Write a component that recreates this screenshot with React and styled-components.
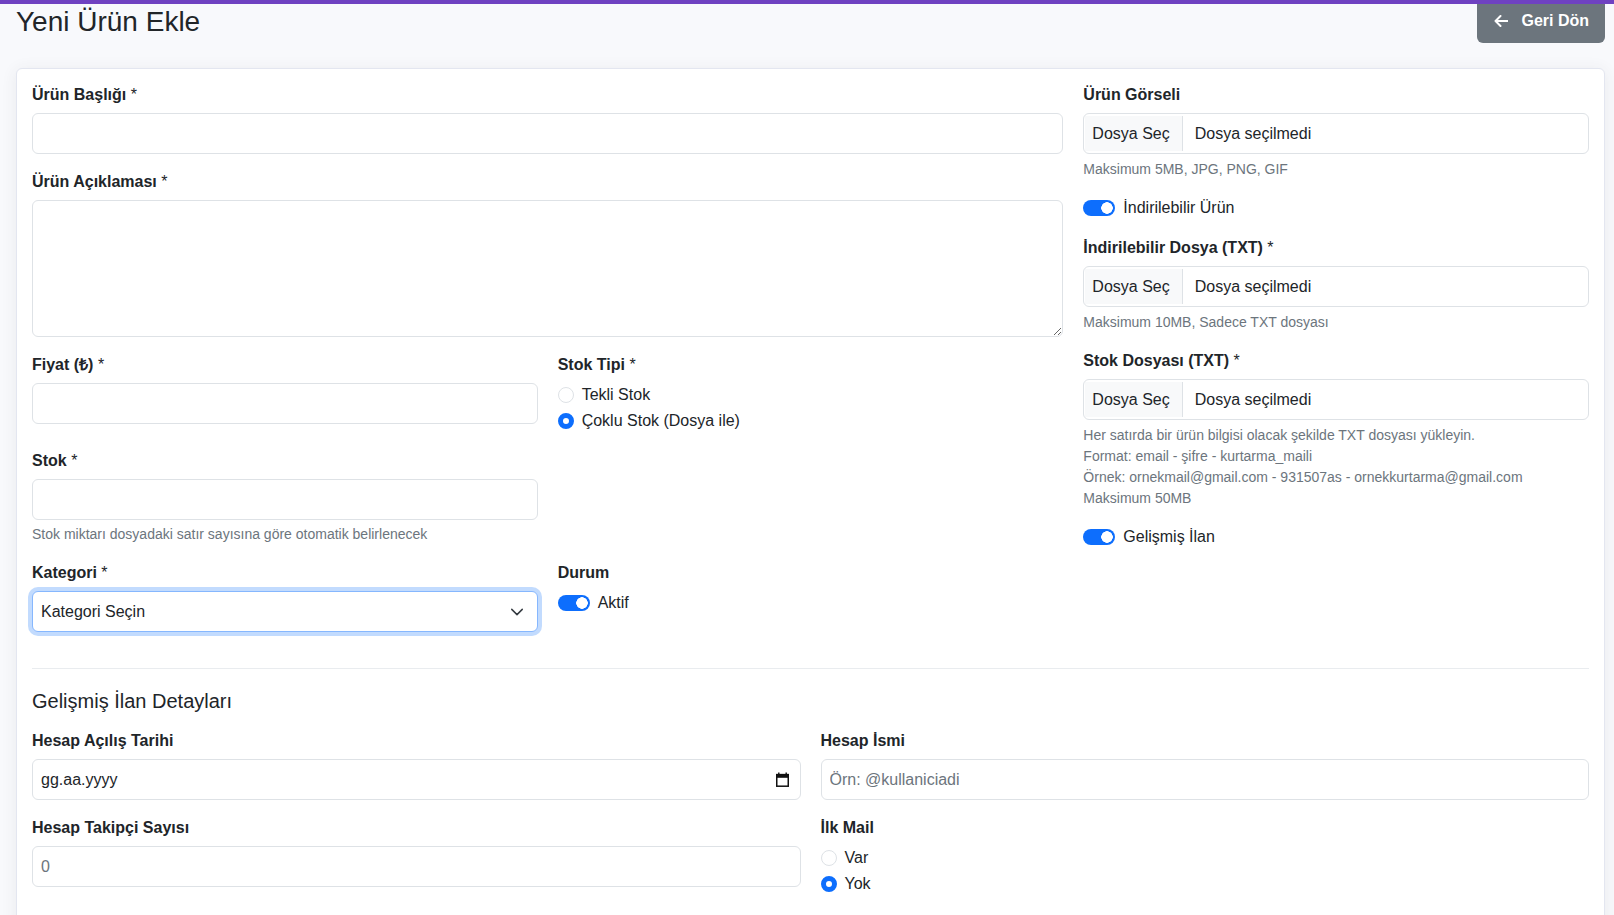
import React from 'react'
import styled, { createGlobalStyle } from 'styled-components'

const GlobalStyle = createGlobalStyle`
  * { box-sizing: border-box; }
  html, body { margin: 0; overflow: hidden; }
  body {
    background: #f8f9fc;
    font-family: "Liberation Sans", Arial, Helvetica, sans-serif;
    font-size: 16px;
    line-height: 1.5;
    color: #212529;
  }
`

const TopBar = styled.div`
  height: 4px;
  background: #6f42c1;
`

const Page = styled.div`
  padding: 0 9px 0 16px;
`

const Header = styled.div`
  display: flex;
  justify-content: space-between;
  align-items: flex-start;
  margin-bottom: 25px;
`

const Title = styled.h1`
  margin: 1px 0 0;
  font-size: 28px;
  font-weight: 400;
  line-height: 1.2;
  color: #212529;
`

const BackButton = styled.button`
  display: inline-flex;
  align-items: center;
  gap: 13px;
  padding: 5px 16px 10px 17px;
  border: none;
  border-radius: 0 0 6px 6px;
  background: #6c757d;
  color: #fff;
  font-family: inherit;
  font-size: 16px;
  font-weight: 700;
  line-height: 24px;
  cursor: pointer;
`

const Card = styled.div`
  background: #fff;
  border: 1px solid #e3e6f0;
  border-radius: 6px;
  box-shadow: 0 2px 16px rgba(58, 59, 69, 0.08);
  padding: 14px 15px 16px;
`

const TopGrid = styled.div`
  display: grid;
  grid-template-columns: calc((100% + 20px) * 8 / 12 - 20px) 1fr;
  column-gap: 20px;
`

const Col = styled.div`
  min-width: 0;
`

const HalfGrid = styled.div`
  display: grid;
  grid-template-columns: 1fr 1fr;
  column-gap: 20px;
`

const Field = styled.div`
  margin-bottom: 16px;
`

const Label = styled.label`
  display: block;
  font-weight: 700;
  line-height: 24px;
  margin-bottom: 6px;
`

const Req = styled.span`
  font-weight: 400;
`

const Input = styled.input`
  display: block;
  width: 100%;
  height: 41px;
  padding: 0 8px;
  font-family: inherit;
  font-size: 16px;
  color: #212529;
  background: #fff;
  border: 1px solid #dee2e6;
  border-radius: 6px;
  outline: none;
  &::placeholder { color: #6c757d; }
`

const TextArea = styled.textarea`
  display: block;
  width: 100%;
  height: 137px;
  padding: 8px;
  font-family: inherit;
  font-size: 16px;
  color: #212529;
  border: 1px solid #dee2e6;
  border-radius: 6px;
  outline: none;
  resize: vertical;
`

const Help = styled.div`
  margin-top: ${p => p.$mt || 5}px;
  font-size: 14px;
  line-height: 21px;
  color: #6c757d;
`

const FileBox = styled.div`
  display: flex;
  align-items: stretch;
  height: 41px;
  border: 1px solid #dee2e6;
  border-radius: 6px;
  overflow: hidden;
  background: #fff;
`

const FileButton = styled.span`
  display: flex;
  align-items: center;
  margin: 2px 0 2px 1px;
  padding: 0 12px 0 7px;
  background: #f8f9fa;
  border-right: 1px solid #dee2e6;
  white-space: nowrap;
`

const FileName = styled.span`
  display: flex;
  align-items: center;
  padding-left: 12px;
`

const CheckList = styled.div`
  display: flex;
  flex-direction: column;
  gap: 2px;
`

const CheckRow = styled.label`
  display: flex;
  align-items: flex-start;
  gap: 8px;
  min-height: 24px;
  line-height: 24px;
  margin-bottom: ${p => (p.$spaced ? '16px' : '0')};
`

const Radio = styled.input.attrs({ type: 'radio' })`
  appearance: none;
  flex-shrink: 0;
  width: 16px;
  height: 16px;
  margin: 4px 0 0;
  border-radius: 50%;
  border: 1px solid #dee2e6;
  background: #fff;
  &:checked {
    border: 5px solid #0d6efd;
  }
`

const Switch = styled.input.attrs({ type: 'checkbox' })`
  appearance: none;
  flex-shrink: 0;
  width: 32px;
  height: 16px;
  margin: 4px 0 0;
  border-radius: 8px;
  background: radial-gradient(circle at 24px 8px, #fff 0 5.5px, transparent 6px), #0d6efd;
`

const SelectWrap = styled.div`
  position: relative;
`

const Select = styled.select`
  display: block;
  width: 100%;
  height: 41px;
  padding: 0 36px 0 8px;
  appearance: none;
  font-family: inherit;
  font-size: 16px;
  color: #212529;
  background: #fff;
  border: 1px solid #86b7fe;
  border-radius: 6px;
  box-shadow: 0 0 0 4px rgba(13, 110, 253, 0.25);
  outline: none;
`

const Chevron = styled.svg`
  position: absolute;
  right: 14px;
  top: 50%;
  transform: translateY(-50%);
  pointer-events: none;
`

const DateBox = styled.div`
  display: flex;
  align-items: center;
  justify-content: space-between;
  height: 41px;
  padding: 0 11px 0 8px;
  border: 1px solid #dee2e6;
  border-radius: 6px;
  background: #fff;
`

const Divider = styled.hr`
  border: 0;
  border-top: 1px solid #e9ecef;
  margin: 20px 0;
`

const SectionTitle = styled.h5`
  margin: 0 0 16px;
  font-size: 20px;
  font-weight: 400;
  line-height: 1.2;
`

const ArrowIcon = () => (
  <svg width="14" height="12" viewBox="0 0 14 12" fill="none">
    <path d="M6.5 1 1.5 6l5 5M1.5 6H13.5" stroke="#fff" strokeWidth="2" strokeLinecap="round" strokeLinejoin="round" />
  </svg>
)

const CalendarIcon = () => (
  <svg width="13" height="15" viewBox="0 0 13 15">
    <path d="M2.8 0.5v2.5M10.2 0.5v2.5" stroke="#111" strokeWidth="1.4" />
    <rect x="0.75" y="2.6" width="11.5" height="11.6" fill="none" stroke="#111" strokeWidth="1.5" />
    <rect x="0.75" y="2.6" width="11.5" height="3.2" fill="#111" />
  </svg>
)

const FileInput = () => (
  <FileBox>
    <FileButton>Dosya Seç</FileButton>
    <FileName>Dosya seçilmedi</FileName>
  </FileBox>
)

export default function App() {
  return (
    <>
      <GlobalStyle />
      <TopBar />
      <Page>
        <Header>
          <Title>Yeni Ürün Ekle</Title>
          <BackButton>
            <ArrowIcon />
            Geri Dön
          </BackButton>
        </Header>

        <Card>
          <TopGrid>
            <Col>
              <Field>
                <Label>Ürün Başlığı <Req>*</Req></Label>
                <Input />
              </Field>
              <Field>
                <Label>Ürün Açıklaması <Req>*</Req></Label>
                <TextArea />
              </Field>

              <HalfGrid>
                <Field>
                  <Label>Fiyat (₺) <Req>*</Req></Label>
                  <Input />
                </Field>
                <Field>
                  <Label>Stok Tipi <Req>*</Req></Label>
                  <CheckList>
                    <CheckRow>
                      <Radio name="stokTipi" />
                      Tekli Stok
                    </CheckRow>
                    <CheckRow>
                      <Radio name="stokTipi" defaultChecked />
                      Çoklu Stok (Dosya ile)
                    </CheckRow>
                  </CheckList>
                </Field>

                <Field>
                  <Label>Stok <Req>*</Req></Label>
                  <Input />
                  <Help $mt={4}>Stok miktarı dosyadaki satır sayısına göre otomatik belirlenecek</Help>
                </Field>
                <div />

                <Field>
                  <Label>Kategori <Req>*</Req></Label>
                  <SelectWrap>
                    <Select defaultValue="">
                      <option value="">Kategori Seçin</option>
                    </Select>
                    <Chevron width="14" height="14" viewBox="0 0 16 16" fill="none">
                      <path d="m2 5 6 6 6-6" stroke="#343a40" strokeWidth="1.7" strokeLinecap="round" strokeLinejoin="round" />
                    </Chevron>
                  </SelectWrap>
                </Field>
                <Field>
                  <Label>Durum</Label>
                  <CheckRow>
                    <Switch defaultChecked />
                    Aktif
                  </CheckRow>
                </Field>
              </HalfGrid>
            </Col>

            <Col>
              <Field>
                <Label>Ürün Görseli</Label>
                <FileInput />
                <Help>Maksimum 5MB, JPG, PNG, GIF</Help>
              </Field>

              <CheckRow $spaced>
                <Switch defaultChecked />
                İndirilebilir Ürün
              </CheckRow>

              <Field>
                <Label>İndirilebilir Dosya (TXT) <Req>*</Req></Label>
                <FileInput />
                <Help>Maksimum 10MB, Sadece TXT dosyası</Help>
              </Field>

              <Field>
                <Label>Stok Dosyası (TXT) <Req>*</Req></Label>
                <FileInput />
                <Help>
                  Her satırda bir ürün bilgisi olacak şekilde TXT dosyası yükleyin.
                  <br />
                  Format: email - şifre - kurtarma_maili
                  <br />
                  Örnek: ornekmail@gmail.com - 931507as - ornekkurtarma@gmail.com
                  <br />
                  Maksimum 50MB
                </Help>
              </Field>

              <CheckRow $spaced>
                <Switch defaultChecked />
                Gelişmiş İlan
              </CheckRow>
            </Col>
          </TopGrid>

          <Divider />

          <SectionTitle>Gelişmiş İlan Detayları</SectionTitle>
          <HalfGrid>
            <Field>
              <Label>Hesap Açılış Tarihi</Label>
              <DateBox>
                <span>gg.aa.yyyy</span>
                <CalendarIcon />
              </DateBox>
            </Field>
            <Field>
              <Label>Hesap İsmi</Label>
              <Input placeholder="Örn: @kullaniciadi" />
            </Field>
            <Field>
              <Label>Hesap Takipçi Sayısı</Label>
              <Input placeholder="0" />
            </Field>
            <Field>
              <Label>İlk Mail</Label>
              <CheckList>
                <CheckRow>
                  <Radio name="ilkMail" />
                  Var
                </CheckRow>
                <CheckRow>
                  <Radio name="ilkMail" defaultChecked />
                  Yok
                </CheckRow>
              </CheckList>
            </Field>
          </HalfGrid>
        </Card>
      </Page>
    </>
  )
}
